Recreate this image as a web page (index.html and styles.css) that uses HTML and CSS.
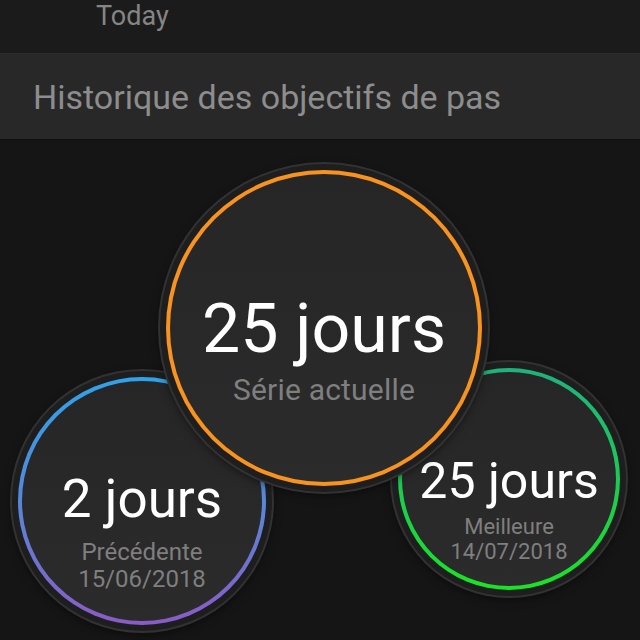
FILE: index.html
```html
<!DOCTYPE html>
<html lang="fr">
<head>
<meta charset="utf-8">
<title>Historique des objectifs de pas</title>
<link rel="stylesheet" href="styles.css">
</head>
<body>
<div class="screen">
  <div class="topbar"><span class="today">Today</span></div>
  <div class="section"><span class="section-title">Historique des objectifs de pas</span></div>
  <div class="stage">
    <div class="bubble bubble-prev">
      <div class="ring ring-prev">
        <div class="face face-prev">
          <div class="val val-prev">2 jours</div>
          <div class="lbl lbl-prev">Précédente<br>15/06/2018</div>
        </div>
      </div>
    </div>
    <div class="bubble bubble-best">
      <div class="ring ring-best">
        <div class="face face-best">
          <div class="val val-best">25 jours</div>
          <div class="lbl lbl-best">Meilleure<br>14/07/2018</div>
        </div>
      </div>
    </div>
    <div class="bubble bubble-cur">
      <div class="ring ring-cur">
        <div class="face face-cur">
          <div class="val val-cur">25 jours</div>
          <div class="lbl lbl-cur">Série actuelle</div>
        </div>
      </div>
    </div>
  </div>
</div>
</body>
</html>
```

FILE: styles.css
```css
* { box-sizing: border-box; }
html, body { margin: 0; padding: 0; }
body {
  background: #151515;
  font-family: Roboto, "Liberation Sans", Arial, sans-serif;
  width: 640px;
  height: 640px;
  overflow: hidden;
}
.screen { width: 640px; height: 640px; display: flex; flex-direction: column; }
.topbar {
  height: 53px;
  background: #1b1b1b;
  padding-left: 96px;
}
.today {
  display: block;
  font-size: 27px;
  line-height: 32px;
  color: #858585;
}
.section {
  height: 87px;
  background: #282828;
  border-top: 1px solid #2c2c2c;
  border-bottom: 1px solid #111;
  display: flex;
  align-items: center;
  padding-left: 33px;
}
.section-title {
  font-size: 34px;
  line-height: 40px;
  color: #8d8d8d;
}
.stage { position: relative; flex: 1; background: #151515; }

.bubble {
  position: absolute;
  border-radius: 50%;
  padding: 6px;
  background: #1e1e1e;
  box-shadow: 0 0 0 2px #323232, 0 3px 10px rgba(0,0,0,0.55);
}
.ring { border-radius: 50%; padding: 4px; }
.face {
  width: 100%;
  height: 100%;
  border-radius: 50%;
  background: linear-gradient(180deg, #262626 0%, #2b2b2b 100%);
  display: flex;
  flex-direction: column;
  align-items: center;
}
.val { color: #ffffff; white-space: nowrap; }
.lbl { white-space: nowrap; color: #7f7f7f; text-align: center; }

/* current streak */
.bubble-cur { left: 160px; top: 24px; z-index: 3; }
.ring-cur { width: 316px; height: 316px; background: #f7931e; }
.face-cur { padding-top: 121px; }
.val-cur { font-size: 68px; line-height: 68px; }
.lbl-cur { font-size: 30px; line-height: 34px; margin-top: 10px; letter-spacing: 0.2px; }

/* previous */
.bubble-prev { left: 12px; top: 231px; z-index: 1; }
.ring-prev { width: 248px; height: 248px; background: linear-gradient(180deg, #2fa3ea 0%, #5b84d8 55%, #8a5bc6 100%); }
.face-prev { padding-top: 92px; }
.val-prev { font-size: 53px; line-height: 53px; }
.lbl-prev { font-size: 24px; line-height: 27px; margin-top: 13px; }

/* best */
.bubble-best { left: 392px; top: 222px; z-index: 1; }
.ring-best { width: 222px; height: 222px; background: linear-gradient(180deg, #1fb27e 0%, #1cc955 50%, #19e425 100%); }
.face-best { padding-top: 84px; }
.val-best { font-size: 50px; line-height: 50px; }
.lbl-best { font-size: 22px; line-height: 25px; margin-top: 8px; }
```
